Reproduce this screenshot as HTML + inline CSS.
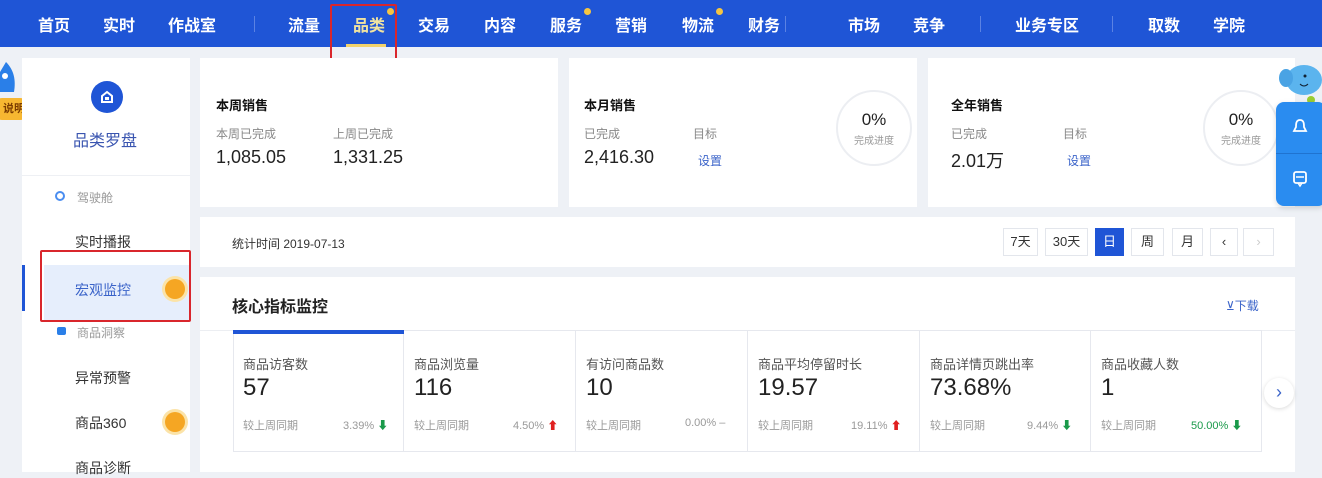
<!DOCTYPE html>
<html><head><meta charset="utf-8"><style>
*{margin:0;padding:0;box-sizing:border-box}
body{width:1322px;height:472px;overflow:hidden;background:#eef1f6;font-family:"Liberation Sans","Noto Sans CJK SC",sans-serif;position:relative;color:#222}
.a{position:absolute;white-space:nowrap}
.nav{left:0;top:0;width:1322px;height:47px;background:#1f55d6}
.ni{top:12px;color:#fff;font-size:16px;font-weight:bold}
.sep{top:16px;width:1px;height:16px;background:#5b82e3}
.dot{width:7px;height:7px;border-radius:50%;background:#f5c542}
.card{background:#fff}
.lab{font-size:12px;color:#888}
.val{font-size:18px;color:#222}
.tt{font-size:13px;font-weight:bold;color:#111}
.btn{top:228px;height:28px;border:1px solid #e3e6ec;background:#fff;font-size:13px;text-align:center;line-height:26px;color:#333}
.mb{top:330px;height:122px;width:172px;border:1px solid #e6e8ee;border-left:none}
.ml{font-size:13px;color:#555}
.mv{font-size:24px;color:#222}
.mc{font-size:11px;color:#999}
</style></head><body>
<div class="a nav"></div>
<div class="a ni" style="left:38px">首页</div>
<div class="a ni" style="left:103px">实时</div>
<div class="a ni" style="left:168px">作战室</div>
<div class="a sep" style="left:254px"></div>
<div class="a ni" style="left:288px">流量</div>
<div class="a ni" style="left:353px;color:#f0e3a0">品类</div>
<div class="a dot" style="left:387px;top:8px"></div>
<div class="a" style="left:346px;top:44px;width:40px;height:3px;background:#f3d36b"></div>
<div class="a ni" style="left:418px">交易</div>
<div class="a ni" style="left:484px">内容</div>
<div class="a ni" style="left:550px">服务</div>
<div class="a dot" style="left:584px;top:8px"></div>
<div class="a ni" style="left:615px">营销</div>
<div class="a ni" style="left:682px">物流</div>
<div class="a dot" style="left:716px;top:8px"></div>
<div class="a ni" style="left:748px">财务</div>
<div class="a sep" style="left:785px"></div>
<div class="a ni" style="left:848px">市场</div>
<div class="a ni" style="left:913px">竞争</div>
<div class="a sep" style="left:980px"></div>
<div class="a ni" style="left:1015px">业务专区</div>
<div class="a sep" style="left:1112px"></div>
<div class="a ni" style="left:1148px">取数</div>
<div class="a ni" style="left:1213px">学院</div>
<div class="a" style="left:330px;top:4px;width:67px;height:69px;border:2px solid #d9262c;border-radius:2px"></div>

<!-- left strip -->
<svg class="a" style="left:0;top:60px" width="20" height="40" viewBox="0 0 20 40"><path d="M6 2 C14 10 16 20 14 32 L0 32 L0 12 Z" fill="#2a7fe8"/><circle cx="5" cy="16" r="3" fill="#fff"/></svg>
<div class="a" style="left:-6px;top:98px;width:34px;height:22px;border-radius:8px;background:#f7b731;color:#7a3b00;font-size:11px;font-weight:bold;line-height:22px;text-align:right;padding-right:3px">说明</div>

<!-- sidebar -->
<div class="a card" style="left:22px;top:58px;width:168px;height:414px"></div>
<div class="a" style="left:22px;top:175px;width:168px;height:1px;background:#eef0f4"></div>
<div class="a" style="left:91px;top:81px;width:32px;height:32px;border-radius:50%;background:#1f55d6"></div>
<svg class="a" style="left:99px;top:89px" width="16" height="16" viewBox="0 0 16 16"><path d="M3 7 L8 3 L13 7 L13 13 L3 13 Z" fill="none" stroke="#fff" stroke-width="2"/><rect x="6" y="8" width="4" height="3" fill="#fff"/></svg>
<div class="a" style="left:73px;top:127px;font-size:16px;color:#3a55b0">品类罗盘</div>
<div class="a" style="left:55px;top:191px;width:10px;height:10px;border:2px solid #4a8df0;border-radius:50%"></div>
<div class="a" style="left:77px;top:189px;font-size:12px;color:#999">驾驶舱</div>
<div class="a" style="left:75px;top:232px;font-size:14px;color:#333">实时播报</div>
<div class="a" style="left:44px;top:265px;width:146px;height:56px;background:#e6eefc"></div>
<div class="a" style="left:22px;top:265px;width:3px;height:46px;background:#1f55d6"></div>
<div class="a" style="left:75px;top:280px;font-size:14px;color:#3a63c9">宏观监控</div>
<div class="a" style="left:165px;top:279px;width:20px;height:20px;border-radius:50%;background:#f5a623;box-shadow:0 0 0 3px #fbe3a8"></div>
<div class="a" style="left:40px;top:250px;width:151px;height:72px;border:2px solid #d9262c;border-radius:2px"></div>
<div class="a" style="left:57px;top:327px;width:9px;height:8px;background:#2a7fe8;border-radius:2px"></div>
<div class="a" style="left:77px;top:324px;font-size:12px;color:#999">商品洞察</div>
<div class="a" style="left:75px;top:368px;font-size:14px;color:#333">异常预警</div>
<div class="a" style="left:75px;top:413px;font-size:14px;color:#333">商品360</div>
<div class="a" style="left:165px;top:412px;width:20px;height:20px;border-radius:50%;background:#f5a623;box-shadow:0 0 0 3px #fbe3a8"></div>
<div class="a" style="left:75px;top:458px;font-size:14px;color:#333">商品诊断</div>

<!-- cards -->
<div class="a card" style="left:200px;top:58px;width:358px;height:149px"></div>
<div class="a tt" style="left:216px;top:95px">本周销售</div>
<div class="a lab" style="left:216px;top:125px">本周已完成</div>
<div class="a lab" style="left:333px;top:125px">上周已完成</div>
<div class="a val" style="left:216px;top:147px">1,085.05</div>
<div class="a val" style="left:333px;top:147px">1,331.25</div>

<div class="a card" style="left:569px;top:58px;width:348px;height:149px"></div>
<div class="a tt" style="left:584px;top:95px">本月销售</div>
<div class="a lab" style="left:584px;top:125px">已完成</div>
<div class="a lab" style="left:693px;top:125px">目标</div>
<div class="a val" style="left:584px;top:147px">2,416.30</div>
<div class="a" style="left:698px;top:152px;font-size:12px;color:#3a63c9">设置</div>
<div class="a" style="left:836px;top:90px;width:76px;height:76px;border-radius:50%;border:2px solid #eceef2"></div>
<div class="a" style="left:836px;top:110px;width:76px;text-align:center;font-size:17px">0%</div>
<div class="a" style="left:836px;top:132px;width:76px;text-align:center;font-size:10px;color:#999">完成进度</div>

<div class="a card" style="left:928px;top:58px;width:367px;height:149px"></div>
<div class="a tt" style="left:951px;top:95px">全年销售</div>
<div class="a lab" style="left:951px;top:125px">已完成</div>
<div class="a lab" style="left:1063px;top:125px">目标</div>
<div class="a val" style="left:951px;top:147px">2.01万</div>
<div class="a" style="left:1067px;top:152px;font-size:12px;color:#3a63c9">设置</div>
<div class="a" style="left:1203px;top:90px;width:76px;height:76px;border-radius:50%;border:2px solid #eceef2"></div>
<div class="a" style="left:1203px;top:110px;width:76px;text-align:center;font-size:17px">0%</div>
<div class="a" style="left:1203px;top:132px;width:76px;text-align:center;font-size:10px;color:#999">完成进度</div>

<!-- float -->
<svg class="a" style="left:1278px;top:62px" width="44" height="42" viewBox="0 0 44 42"><ellipse cx="26" cy="18" rx="18" ry="15" fill="#5bb4ee"/><ellipse cx="8" cy="16" rx="7" ry="9" fill="#4aa3e4"/><circle cx="27" cy="14" r="1.5" fill="#123"/><path d="M22 22 Q26 26 30 22" stroke="#123" stroke-width="1" fill="none"/><circle cx="33" cy="38" r="4" fill="#9acd32"/></svg>
<div class="a" style="left:1276px;top:102px;width:50px;height:104px;border-radius:8px;background:#2a8cf0;box-shadow:0 2px 6px rgba(0,0,0,.15)"></div>
<div class="a" style="left:1276px;top:153px;width:46px;height:1px;background:#1f73d0"></div>
<svg class="a" style="left:1292px;top:118px" width="16" height="18" viewBox="0 0 16 18"><path d="M8 2 C4 2 4 6 4 9 L2 13 L14 13 L12 9 C12 6 12 2 8 2 Z" fill="none" stroke="#fff" stroke-width="1.8"/></svg>
<svg class="a" style="left:1292px;top:170px" width="16" height="18" viewBox="0 0 16 18"><rect x="2" y="2" width="12" height="11" rx="2" fill="none" stroke="#fff" stroke-width="1.8"/><line x1="4" y1="7" x2="12" y2="7" stroke="#fff" stroke-width="1.5"/><path d="M6 13 L8 16 L10 13" fill="none" stroke="#fff" stroke-width="1.5"/></svg>

<!-- date bar -->
<div class="a card" style="left:200px;top:217px;width:1095px;height:50px"></div>
<div class="a" style="left:232px;top:235px;font-size:12px;color:#333">统计时间 2019-07-13</div>
<div class="a btn" style="left:1003px;width:35px">7天</div>
<div class="a btn" style="left:1045px;width:43px">30天</div>
<div class="a btn" style="left:1095px;width:29px;background:#1f55d6;color:#fff;border-color:#1f55d6">日</div>
<div class="a btn" style="left:1131px;width:33px">周</div>
<div class="a btn" style="left:1172px;width:31px">月</div>
<div class="a btn" style="left:1210px;width:28px">‹</div>
<div class="a btn" style="left:1243px;width:31px;color:#ccc">›</div>

<!-- core -->
<div class="a card" style="left:200px;top:277px;width:1095px;height:195px"></div>
<div class="a" style="left:232px;top:293px;font-size:16px;font-weight:bold;color:#222">核心指标监控</div>
<div class="a" style="left:1226px;top:297px;font-size:12px;color:#3a63c9">⊻下载</div>
<div class="a" style="left:200px;top:330px;width:1095px;height:1px;background:#eceef2"></div>
<div class="a mb" style="left:233px;width:171px;border-left:1px solid #e6e8ee"></div>
<div class="a mb" style="left:404px"></div>
<div class="a mb" style="left:576px"></div>
<div class="a mb" style="left:748px"></div>
<div class="a mb" style="left:920px;width:171px"></div>
<div class="a mb" style="left:1091px;width:171px"></div>
<div class="a" style="left:233px;top:330px;width:171px;height:4px;background:#1f55d6"></div>

<div class="a ml" style="left:243px;top:354px">商品访客数</div>
<div class="a mv" style="left:243px;top:374px">57</div>
<div class="a mc" style="left:243px;top:417px">较上周同期</div>
<div class="a mc" style="left:343px;top:417px">3.39% <span style="color:#1a9a4a">⬇</span></div>

<div class="a ml" style="left:414px;top:354px">商品浏览量</div>
<div class="a mv" style="left:414px;top:374px">116</div>
<div class="a mc" style="left:414px;top:417px">较上周同期</div>
<div class="a mc" style="left:513px;top:417px">4.50% <span style="color:#e02020">⬆</span></div>

<div class="a ml" style="left:586px;top:354px">有访问商品数</div>
<div class="a mv" style="left:586px;top:374px">10</div>
<div class="a mc" style="left:586px;top:417px">较上周同期</div>
<div class="a mc" style="left:685px;top:417px">0.00% –</div>

<div class="a ml" style="left:758px;top:354px">商品平均停留时长</div>
<div class="a mv" style="left:758px;top:374px">19.57</div>
<div class="a mc" style="left:758px;top:417px">较上周同期</div>
<div class="a mc" style="left:851px;top:417px">19.11% <span style="color:#e02020">⬆</span></div>

<div class="a ml" style="left:930px;top:354px">商品详情页跳出率</div>
<div class="a mv" style="left:930px;top:374px">73.68%</div>
<div class="a mc" style="left:930px;top:417px">较上周同期</div>
<div class="a mc" style="left:1027px;top:417px">9.44% <span style="color:#1a9a4a">⬇</span></div>

<div class="a ml" style="left:1101px;top:354px">商品收藏人数</div>
<div class="a mv" style="left:1101px;top:374px">1</div>
<div class="a mc" style="left:1101px;top:417px">较上周同期</div>
<div class="a mc" style="left:1191px;top:417px;color:#1a9a4a">50.00% ⬇</div>

<div class="a" style="left:1264px;top:378px;width:30px;height:30px;border-radius:50%;background:#fff;box-shadow:0 1px 4px rgba(0,0,0,.15);text-align:center;line-height:28px;font-size:18px;color:#3a63c9">›</div>
</body></html>
